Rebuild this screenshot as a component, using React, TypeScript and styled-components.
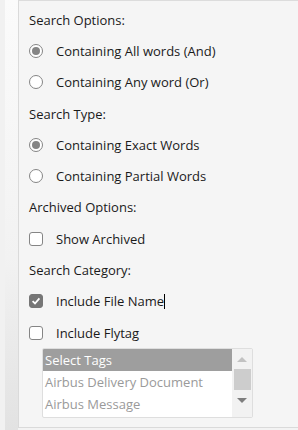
import React from "react"
import styled, { createGlobalStyle } from "styled-components"

const GlobalStyle = createGlobalStyle`
  html, body {
    margin: 0;
    padding: 0;
    background: #f3f3f3;
  }
  body {
    font-family: "Open Sans", "Liberation Sans", sans-serif;
  }
`

const Page = styled.div`
  display: flex;
  width: 298px;
  height: 430px;
  overflow: hidden;
`

const Rail = styled.div`
  width: 5px;
  background: #f1f1f1;
`

const Gutter = styled.div`
  width: 13px;
  background: linear-gradient(to bottom, #fbfbfb 0%, #f2f2f2 60%, #e2e2e2 100%);
`

const Panel = styled.div`
  flex: 1;
  height: 428px;
  box-sizing: border-box;
  border-left: 1px solid #dadada;
  border-top: 1px solid #dcdcdc;
  border-bottom: 1px solid #dadada;
  background: #f5f5f5;
  padding: 3px 0 0 10px;
`

const Row = styled.div`
  display: flex;
  align-items: center;
  height: 31.3px;
  font-size: 13px;
  color: #1a1a1a;
  white-space: nowrap;
`

const Label = styled.span`
  margin-left: 13px;
`

const Radio = styled.span<{ $on?: boolean }>`
  position: relative;
  width: 14px;
  height: 14px;
  box-sizing: border-box;
  border: 1px solid #858585;
  border-radius: 50%;
  background: #fff;
  flex-shrink: 0;

  &::after {
    content: "";
    display: ${(p) => (p.$on ? "block" : "none")};
    position: absolute;
    left: 2px;
    top: 2px;
    width: 8px;
    height: 8px;
    border-radius: 50%;
    background: #858585;
  }
`

const Check = styled.span<{ $on?: boolean }>`
  display: flex;
  align-items: center;
  justify-content: center;
  width: 14px;
  height: 14px;
  box-sizing: border-box;
  border: 1px solid ${(p) => (p.$on ? "#767676" : "#858585")};
  border-radius: 3px;
  background: ${(p) => (p.$on ? "#767676" : "#fff")};
  flex-shrink: 0;
`

const Caret = styled.span`
  display: inline-block;
  width: 1px;
  height: 15px;
  background: #000;
  vertical-align: -3px;
`

const ListBox = styled.div`
  display: flex;
  margin-left: 13px;
  width: 211px;
  height: 70px;
  box-sizing: border-box;
  border: 1px solid #dedede;
  border-radius: 2px;
  background: #fff;
  overflow: hidden;
`

const Items = styled.div`
  flex: 1;
`

const Item = styled.div<{ $sel?: boolean }>`
  height: 22px;
  line-height: 22px;
  padding-left: 2px;
  font-size: 13px;
  color: ${(p) => (p.$sel ? "#fff" : "#9a9a9a")};
  background: ${(p) => (p.$sel ? "#9e9e9e" : "transparent")};
  white-space: nowrap;
`

const ScrollBar = styled.div`
  display: flex;
  flex-direction: column;
  align-items: center;
  width: 20px;
  background: #f2f2f2;
  padding: 0 1px;
  box-sizing: border-box;
`

const Arrow = styled.div<{ $down?: boolean; $color: string }>`
  height: 20px;
  display: flex;
  align-items: center;
  justify-content: center;

  &::after {
    content: "";
    border-left: 5px solid transparent;
    border-right: 5px solid transparent;
    ${(p) =>
      p.$down
        ? `border-top: 5px solid ${p.$color};`
        : `border-bottom: 5px solid ${p.$color};`}
  }
`

const Thumb = styled.div`
  width: 17px;
  height: 21px;
  background: #cdcdcd;
`

const Tick = () => (
  <svg width="10" height="10" viewBox="0 0 10 10">
    <path d="M1.6 5.2 L4 7.5 L8.4 2.4" fill="none" stroke="#fff" strokeWidth="1.8" />
  </svg>
)

const App = () => (
  <>
    <GlobalStyle />
    <Page>
      <Rail />
      <Gutter />
      <Panel>
        <Row>Search Options:</Row>
        <Row>
          <Radio $on />
          <Label>Containing All words (And)</Label>
        </Row>
        <Row>
          <Radio />
          <Label>Containing Any word (Or)</Label>
        </Row>
        <Row>Search Type:</Row>
        <Row>
          <Radio $on />
          <Label>Containing Exact Words</Label>
        </Row>
        <Row>
          <Radio />
          <Label>Containing Partial Words</Label>
        </Row>
        <Row>Archived Options:</Row>
        <Row>
          <Check />
          <Label>Show Archived</Label>
        </Row>
        <Row>Search Category:</Row>
        <Row>
          <Check $on>
            <Tick />
          </Check>
          <Label>
            Include File Name
            <Caret />
          </Label>
        </Row>
        <Row>
          <Check />
          <Label>Include Flytag</Label>
        </Row>
        <ListBox>
          <Items>
            <Item $sel>Select Tags</Item>
            <Item>Airbus Delivery Document</Item>
            <Item>Airbus Message</Item>
          </Items>
          <ScrollBar>
            <Arrow $color="#c2c2c2" />
            <Thumb />
            <Arrow $down $color="#7e7e7e" />
          </ScrollBar>
        </ListBox>
      </Panel>
    </Page>
  </>
)

export default App
